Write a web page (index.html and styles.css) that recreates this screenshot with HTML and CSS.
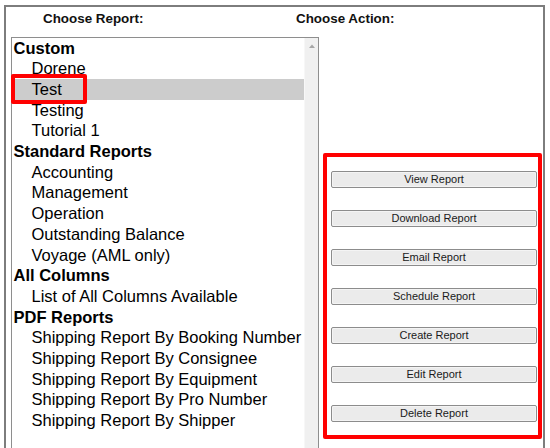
FILE: index.html
```html
<!DOCTYPE html>
<html>
<head>
<meta charset="utf-8">
<link rel="stylesheet" href="styles.css">
</head>
<body>
<div class="frame">
  <div class="heads">
    <span class="head head-report">Choose Report:</span>
    <span class="head">Choose Action:</span>
  </div>
  <div class="main">
    <div class="listbox">
      <div class="rows">
        <div class="grp">Custom</div>
        <div class="opt">Dorene</div>
        <div class="opt sel">Test</div>
        <div class="opt">Testing</div>
        <div class="opt">Tutorial 1</div>
        <div class="grp">Standard Reports</div>
        <div class="opt">Accounting</div>
        <div class="opt">Management</div>
        <div class="opt">Operation</div>
        <div class="opt">Outstanding Balance</div>
        <div class="opt">Voyage (AML only)</div>
        <div class="grp">All Columns</div>
        <div class="opt">List of All Columns Available</div>
        <div class="grp">PDF Reports</div>
        <div class="opt">Shipping Report By Booking Number</div>
        <div class="opt">Shipping Report By Consignee</div>
        <div class="opt">Shipping Report By Equipment</div>
        <div class="opt">Shipping Report By Pro Number</div>
        <div class="opt">Shipping Report By Shipper</div>
      </div>
      <div class="scrollbar">
        <svg class="arrow" width="6" height="4" viewBox="0 0 6 4"><polygon points="0,4 3,0.5 6,4" fill="#a6a6a6"/></svg>
      </div>
      <div class="mark-test"></div>
    </div>
    <div class="actions">
      <button class="btn">View Report</button>
      <button class="btn">Download Report</button>
      <button class="btn">Email Report</button>
      <button class="btn">Schedule Report</button>
      <button class="btn">Create Report</button>
      <button class="btn">Edit Report</button>
      <button class="btn">Delete Report</button>
    </div>
  </div>
</div>
</body>
</html>
```
FILE: styles.css
```css
html, body {
  margin: 0;
  padding: 0;
  overflow: hidden;
  background: #ffffff;
  font-family: "Liberation Sans", Arial, sans-serif;
  color: #000;
}

.frame {
  margin: 5px 0 0 4px;
  width: 537px;
  height: 470px;
  border: 2px solid #7d7d7d;
  border-bottom: none;
}

.heads {
  display: flex;
  height: 26px;
  padding: 4px 0 0 37px;
  font-size: 13.4px;
  line-height: 16px;
  font-weight: bold;
  color: #111;
}

.head-report {
  width: 253px;
}

.main {
  display: flex;
  align-items: flex-start;
}

.listbox {
  position: relative;
  display: flex;
  margin-left: 5px;
  width: 306px;
  height: 430px;
  border: 1px solid #8e8e8e;
  background: #fff;
}

.rows {
  width: 292px;
  margin-top: -0.5px;
  font-size: 16.5px;
  line-height: 20.7px;
}

.grp {
  font-weight: bold;
  padding-left: 1.5px;
  white-space: nowrap;
}

.opt {
  padding-left: 19.5px;
  white-space: nowrap;
}

.sel {
  background: #cccccc;
}

.scrollbar {
  width: 14px;
  background: #f0f0f0;
  border-left: 1px solid #f7f7f7;
  box-sizing: border-box;
  display: flex;
  justify-content: center;
}

.arrow {
  margin-top: 6px;
  display: block;
}

.mark-test {
  position: absolute;
  left: -1px;
  top: 35.5px;
  width: 68px;
  height: 22px;
  border: 4px solid #ff0000;
  border-radius: 2px;
}

.actions {
  margin: 116px 0 0 4px;
  border: 4px solid #ff0000;
  border-radius: 2px;
  padding: 14px 0 13px 4px;
  box-sizing: content-box;
  display: flex;
  flex-direction: column;
  gap: 22px;
  width: 207px;
}

.btn {
  display: block;
  width: 206px;
  height: 17px;
  margin: 0;
  padding: 0;
  border: 1px solid #8c8c8c;
  border-radius: 2px;
  background: #ebebeb;
  box-shadow: inset 0 0 0 1px #f4f4f4;
  font-family: "Liberation Sans", Arial, sans-serif;
  font-size: 11px;
  line-height: 15px;
  color: #1a1a1a;
  text-align: center;
}
```
